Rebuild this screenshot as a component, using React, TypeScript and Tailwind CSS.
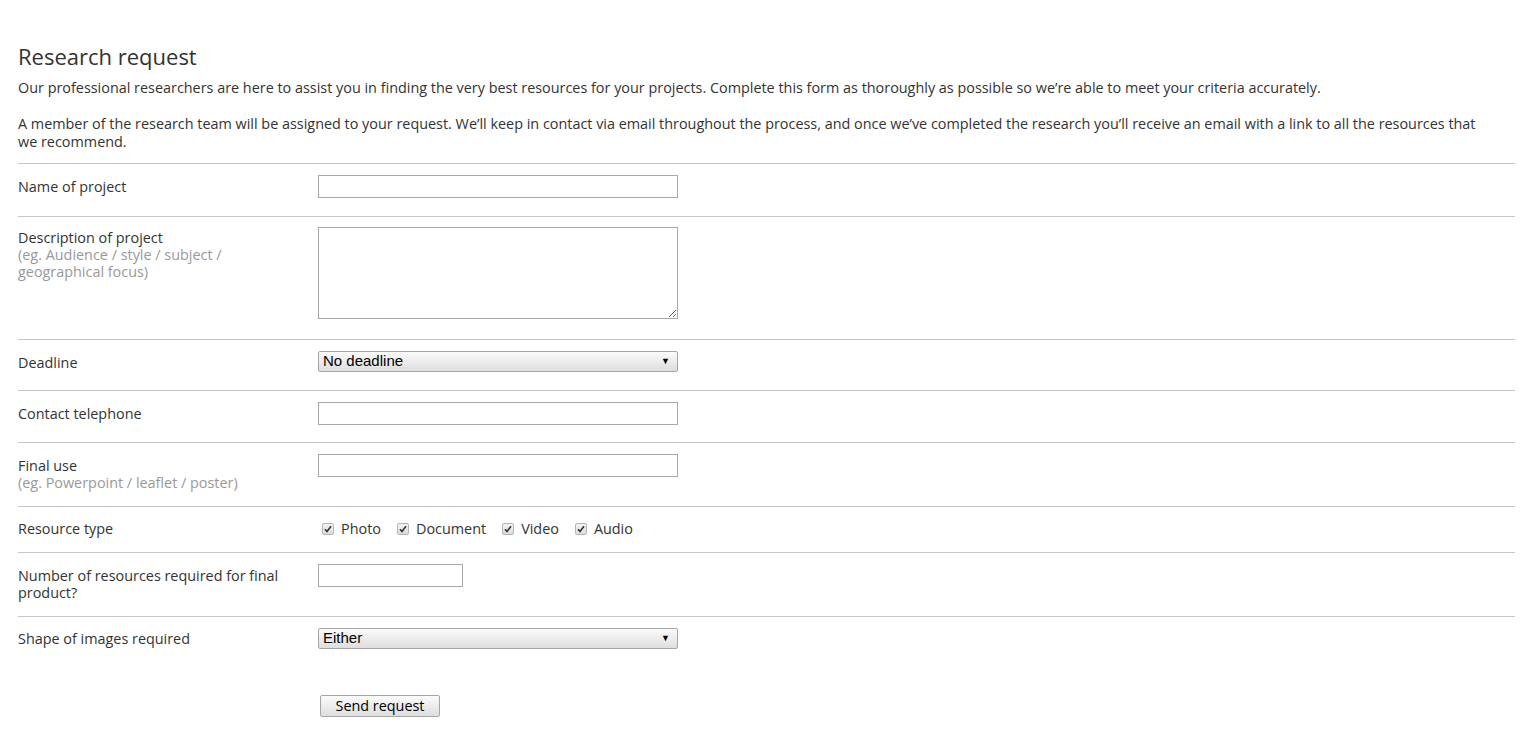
import type { ReactNode } from 'react';

const Label = ({ title, hint, top = 'pt-[3px]' }: { title: string; hint?: string; top?: string }) => (
  <div className={`${top} leading-[17px] pr-6`}>
    <div>{title}</div>
    {hint && <div className="text-[#999]">{hint}</div>}
  </div>
);

const Row = ({ h, pt = 'pt-[11px]', children }: { h: string; pt?: string; children: ReactNode }) => (
  <div className={`grid grid-cols-[300px_1fr] items-start box-border border-t border-[#c6c6c6] ${pt} ${h}`}>
    {children}
  </div>
);

const TextBox = ({ w = 'w-[360px]' }: { w?: string }) => (
  <input type="text" className={`${w} h-[23px] border border-[#a9a9a9] bg-white px-1 outline-none block`} />
);

const FakeSelect = ({ value }: { value: string }) => (
  <div className="w-[360px] h-[21px] border border-[#a6a6a6] rounded-[2px] bg-linear-to-b from-[#fbfbfb] to-[#dedede] flex items-center justify-between pl-[4px] pr-[7px] text-black text-[15px] font-['Liberation_Sans',Arial,sans-serif]">
    <span>{value}</span>
    <span className="text-[9px] leading-none">▼</span>
  </div>
);

const Check = ({ label }: { label: string }) => (
  <label className="flex items-center">
    <span className="ml-[4px] mr-[7px] w-[12px] h-[12px] rounded-[2px] border border-[#b5b5b5] bg-linear-to-b from-[#f4f4f4] to-[#dcdcdc] flex items-center justify-center">
      <svg width="8" height="8" viewBox="0 0 8 8">
        <path d="M1 4.2 L3 6.4 L7 1.2" fill="none" stroke="#333" strokeWidth="1.6" />
      </svg>
    </span>
    <span className="mr-[12px]">{label}</span>
  </label>
);

export default function App() {
  return (
    <div className="min-h-screen bg-white text-[#333] text-[14.4px] font-['Open_Sans','Noto_Sans',sans-serif] pl-[18px] pr-[10px] pt-[43px]">
      <h1 className="text-[22px] leading-[26px] font-normal">Research request</h1>
      <p className="mt-[10px] leading-[18px]">
        Our professional researchers are here to assist you in finding the very best resources for your projects. Complete this form as thoroughly as possible so we’re able to meet your criteria accurately.
      </p>
      <p className="mt-[18px] leading-[18px] pr-[20px]">
        A member of the research team will be assigned to your request. We’ll keep in contact via email throughout the process, and once we’ve completed the research you’ll receive an email with a link to all the resources that we recommend.
      </p>

      <form className="mt-[12px]" onSubmit={(e) => e.preventDefault()}>
        <Row h="h-[53px]">
          <Label title="Name of project" />
          <TextBox />
        </Row>
        <Row h="h-[123px]" pt="pt-[10px]">
          <Label title="Description of project" hint="(eg. Audience / style / subject / geographical focus)" top="pt-[2px]" />
          <textarea className="w-[360px] h-[92px] border border-[#a9a9a9] bg-white outline-none block" />
        </Row>
        <Row h="h-[51px]">
          <Label title="Deadline" />
          <FakeSelect value="No deadline" />
        </Row>
        <Row h="h-[52px]">
          <Label title="Contact telephone" />
          <TextBox />
        </Row>
        <Row h="h-[64px]">
          <Label title="Final use" hint="(eg. Powerpoint / leaflet / poster)" />
          <TextBox />
        </Row>
        <Row h="h-[46px]">
          <Label title="Resource type" top="pt-[2px]" />
          <div className="flex items-center pt-[2px] leading-[17px]">
            <Check label="Photo" />
            <Check label="Document" />
            <Check label="Video" />
            <Check label="Audio" />
          </div>
        </Row>
        <Row h="h-[64px]">
          <Label title="Number of resources required for final product?" />
          <TextBox w="w-[145px]" />
        </Row>
        <Row h="h-[52px]">
          <Label title="Shape of images required" top="pt-[2px]" />
          <FakeSelect value="Either" />
        </Row>
        <div className="grid grid-cols-[300px_1fr] pt-[27px]">
          <div />
          <button
            type="submit"
            className="ml-[2px] w-[120px] h-[22px] border border-[#a6a6a6] rounded-[2px] bg-linear-to-b from-[#fbfbfb] to-[#dedede] text-black text-[14.4px] leading-none"
          >
            Send request
          </button>
        </div>
      </form>
    </div>
  );
}
